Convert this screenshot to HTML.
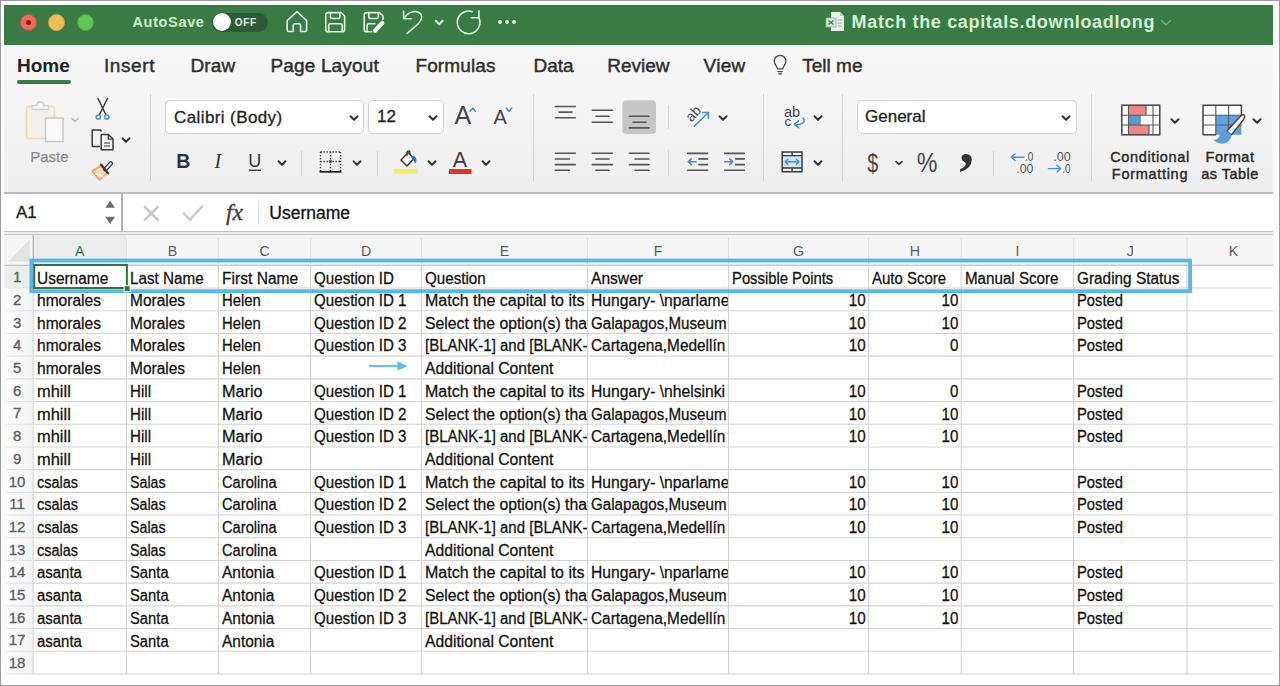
<!DOCTYPE html>
<html lang="en"><head><meta charset="utf-8"><title>Match the capitals.downloadlong</title>
<style>
*{box-sizing:border-box;margin:0;padding:0}
html,body{width:1280px;height:686px;overflow:hidden;background:#fff}
body{font-family:"Liberation Sans",sans-serif;color:#222;position:relative}
.abs,.t{position:absolute;white-space:pre}
.t{line-height:1}
#frame{position:absolute;left:0;top:0;width:1280px;height:686px;border:1px solid #9c9ca0;pointer-events:none;z-index:50}
#title{position:absolute;left:4px;top:5.200px;width:1269px;height:39.400px;background:#3a7b45}
#tabs{position:absolute;left:4px;top:44.600px;width:1269px;height:148.400px;background:linear-gradient(#f6f6f6,#f4f4f4 45%,#eeeeee)}
#ribbon{display:none}
#ribbonline{position:absolute;left:4px;top:192.400px;width:1269px;height:1.600px;background:#bcbcbc}
#fbar{position:absolute;left:4px;top:194px;width:1269px;height:37px;background:#fff}
.sep{position:absolute;width:1px;background:#d4d4d4}
.box{position:absolute;background:#fff;border:1px solid #d2d2d2;border-radius:5px}
.tab{position:absolute;top:55px;font-size:19px;line-height:22px;color:#2e2e2e;white-space:pre;-webkit-text-stroke:0.45px #2e2e2e}
.cell{position:absolute;font-size:17.3px;line-height:20px;white-space:pre;color:#111;overflow:hidden;-webkit-text-stroke:0.28px #111;transform:scaleX(0.88);transform-origin:0 50%}
.cell.r{transform-origin:100% 50%;text-align:right}

.hd{position:absolute;font-size:14.2px;line-height:18px;color:#555;text-align:center;white-space:pre}
.lbl{position:absolute;font-size:14.5px;line-height:17px;color:#262626;text-align:center;white-space:pre;-webkit-text-stroke:0.38px #262626}
svg{position:absolute;overflow:visible}
</style></head>
<body>
<div id="title"></div>
<div class="abs" style="left:19.5px;top:13.5px;width:17px;height:17px;border-radius:50%;background:#ee6a5f;border:1px solid #d1503f"></div>
<div class="abs" style="left:48.0px;top:13.5px;width:17px;height:17px;border-radius:50%;background:#f5bd4f;border:1px solid #d6a13d"></div>
<div class="abs" style="left:76.5px;top:13.5px;width:17px;height:17px;border-radius:50%;background:#61c455;border:1px solid #52a73c"></div>
<div class="abs" style="left:25.5px;top:19.5px;width:5px;height:5px;border-radius:50%;background:#8c1a10"></div>
<div class="t" style="left:132.500px;top:15.300px;font-size:14.5px;font-weight:bold;letter-spacing:0.65px;color:#cfeed3">AutoSave</div>
<div class="abs" style="left:212px;top:12.500px;width:56px;height:19.500px;border-radius:10px;background:#2d5b36"></div>
<div class="abs" style="left:212.500px;top:13.300px;width:18px;height:18px;border-radius:50%;background:#fff;box-shadow:0 0.5px 1.5px rgba(0,0,0,.4)"></div>
<div class="t" style="left:234.800px;top:17.600px;font-size:10px;font-weight:bold;color:#e3f3e5;letter-spacing:0.6px">OFF</div>
<svg style="left:280px;top:5px" width="250" height="40" viewBox="280 5 250 40" fill="none" stroke="#dff3e1" stroke-width="1.6" stroke-linecap="round" stroke-linejoin="round">
<path d="M287.200 20.500 L296.900 11.700 L306.600 20.500 V30 Q306.600 31.500 305.100 31.500 H300.600 V25.500 Q300.600 23.800 298.900 23.800 H294.900 Q293.200 23.800 293.200 25.500 V31.500 H288.700 Q287.200 31.500 287.200 30 Z"/>
<path d="M328.200 12.600 H341.200 L344.600 16 V29.400 Q344.600 31.800 342.200 31.800 H328.200 Q325.800 31.800 325.800 29.400 V15 Q325.800 12.600 328.200 12.600 Z"/><path d="M330.400 12.800 V16.800 Q330.400 18.500 332.100 18.500 H338.200 Q339.900 18.500 339.900 16.800 V12.800"/><path d="M328.700 31.600 V25.500 Q328.700 23.800 330.400 23.800 H340.500 Q342.200 23.800 342.200 25.500 V31.600"/>
<path d="M372 31.800 H366.600 Q364.200 31.800 364.200 29.400 V15 Q364.200 12.600 366.600 12.600 H379.600 L383 16 V19.500"/><path d="M368.800 12.800 V16.800 Q368.800 18.500 370.500 18.500 H376.600 Q378.300 18.500 378.300 16.800 V12.800"/><path d="M367.100 31.600 V25.500 Q367.100 23.800 368.800 23.800 H375"/>
<path d="M382.300 23 L375 30.800" stroke="#f4fbf4" stroke-width="4.200"/>
<path d="M403.600 11.300 V18.700 H411.200"/><path d="M404 18.300 C407 14 411 11.500 415 11.500 C419.500 11.500 422 14.500 421.700 17.500 C421.500 20 420 22 418 24 L407.200 33.400"/>
<path d="M435.800 20.800 L439.200 24.400 L442.600 20.800" stroke-width="2"/>
<path d="M478.870 17.680 A11.300 11.300 0 1 1 472.100 11.650"/><path d="M471.200 17.700 H478.900 V11.100"/>
</svg>
<div class="abs" style="left:498.1px;top:20.200px;width:4px;height:4px;border-radius:50%;background:#dff3e1"></div>
<div class="abs" style="left:505.2px;top:20.200px;width:4px;height:4px;border-radius:50%;background:#dff3e1"></div>
<div class="abs" style="left:512.2px;top:20.200px;width:4px;height:4px;border-radius:50%;background:#dff3e1"></div>
<svg style="left:824.500px;top:11px" width="22" height="22" viewBox="0 0 22 22"><path d="M6 1 H15 L19 5 V20 H6 Z" fill="#e8f1e9"/><path d="M15 1 V5 H19 Z" fill="#b9d3bd"/><rect x="1" y="7" width="10" height="9" fill="#d4e6d6" stroke="#8fb896" stroke-width="0.8"/><path d="M3.500 9.500 L8.500 13.500 M8.500 9.500 L3.500 13.500" stroke="#3b7d46" stroke-width="1.2"/><path d="M12.500 9 H17 M12.500 12 H17 M12.500 15 H17" stroke="#8fb896" stroke-width="1"/></svg>
<div class="t" style="left:851.600px;top:13.300px;font-size:18px;font-weight:bold;color:#d5f0d9;letter-spacing:0.66px">Match the capitals.downloadlong</div>
<svg style="left:1160px;top:19px" width="12" height="8" viewBox="0 0 12 8" fill="none" stroke="#74ab7c" stroke-width="1.5" stroke-linecap="round" stroke-linejoin="round"><path d="M1.500 1.500 L6 6 L10.500 1.500"/></svg>
<div id="tabs"></div>
<div class="tab" style="left:17px;font-weight:bold;color:#222;-webkit-text-stroke:0">Home</div>
<div class="tab" style="left:104px;letter-spacing:0.58px">Insert</div>
<div class="tab" style="left:190.5px;letter-spacing:0.1px">Draw</div>
<div class="tab" style="left:270.5px;letter-spacing:0.15px">Page Layout</div>
<div class="tab" style="left:415.5px;letter-spacing:0.1px">Formulas</div>
<div class="tab" style="left:533.5px;letter-spacing:0px">Data</div>
<div class="tab" style="left:607.3px;letter-spacing:0px">Review</div>
<div class="tab" style="left:703.5px;letter-spacing:0.3px">View</div>
<div class="tab" style="left:802.3px;letter-spacing:0px">Tell me</div>
<div class="abs" style="left:17.200px;top:80.200px;width:53.500px;height:3.400px;border-radius:2px;background:#3a7b45"></div>
<svg style="left:772.300px;top:54px" width="16.200" height="21.600" viewBox="0 0 18 24" fill="none" stroke="#444" stroke-width="1.4" stroke-linecap="round" stroke-linejoin="round"><path d="M6 16.500 C6 13.500 2.500 12 2.500 8 A6.500 6.500 0 0 1 15.500 8 C15.500 12 12 13.500 12 16.500 Z"/><path d="M6.500 19.500 H11.500 M7.500 22 H10.500"/></svg>
<div id="ribbon"></div><div id="ribbonline"></div>
<div class="sep" style="left:150px;top:93.5px;height:87.5px"></div>
<div class="sep" style="left:533px;top:93.5px;height:87.5px"></div>
<div class="sep" style="left:763px;top:93.5px;height:87.5px"></div>
<div class="sep" style="left:841.5px;top:93.5px;height:87.5px"></div>
<div class="sep" style="left:1091px;top:93.5px;height:87.5px"></div>
<div class="sep" style="left:301px;top:151px;height:25px"></div>
<div class="sep" style="left:377px;top:151px;height:25px"></div>
<div class="sep" style="left:668px;top:105px;height:24px"></div>
<div class="sep" style="left:668px;top:150px;height:26px"></div>
<div class="sep" style="left:993px;top:151px;height:25px"></div>
<div class="box" style="left:165px;top:100px;width:199px;height:34px"></div>
<div class="box" style="left:368px;top:100px;width:76px;height:34px"></div>
<div class="box" style="left:857px;top:100px;width:220px;height:34px"></div>
<div class="t" style="left:174px;top:108.600px;font-size:17px;letter-spacing:0.4px;color:#1e1e1e;-webkit-text-stroke:0.3px #1e1e1e">Calibri (Body)</div>
<div class="t" style="left:377px;top:108px;font-size:17px;color:#1e1e1e;-webkit-text-stroke:0.3px #1e1e1e">12</div>
<div class="t" style="left:865px;top:108px;font-size:17px;color:#1e1e1e;-webkit-text-stroke:0.3px #1e1e1e">General</div>
<svg style="left:348px;top:113px" width="12" height="10" viewBox="-6 -5 12 10" fill="none" stroke="#333" stroke-width="2" stroke-linecap="round" stroke-linejoin="round"><path d="M-3.5 -1.75 L0 1.75 L3.5 -1.75"/></svg>
<svg style="left:427px;top:113px" width="12" height="10" viewBox="-6 -5 12 10" fill="none" stroke="#333" stroke-width="2" stroke-linecap="round" stroke-linejoin="round"><path d="M-3.5 -1.75 L0 1.75 L3.5 -1.75"/></svg>
<svg style="left:1060px;top:113px" width="12" height="10" viewBox="-6 -5 12 10" fill="none" stroke="#333" stroke-width="2" stroke-linecap="round" stroke-linejoin="round"><path d="M-3.5 -1.75 L0 1.75 L3.5 -1.75"/></svg>
<svg style="left:120px;top:135px" width="12" height="10" viewBox="-6 -5 12 10" fill="none" stroke="#333" stroke-width="2" stroke-linecap="round" stroke-linejoin="round"><path d="M-3.5 -1.75 L0 1.75 L3.5 -1.75"/></svg>
<svg style="left:275.5px;top:158px" width="12" height="10" viewBox="-6 -5 12 10" fill="none" stroke="#333" stroke-width="2" stroke-linecap="round" stroke-linejoin="round"><path d="M-3.5 -1.75 L0 1.75 L3.5 -1.75"/></svg>
<svg style="left:350.8px;top:157.5px" width="12" height="10" viewBox="-6 -5 12 10" fill="none" stroke="#333" stroke-width="2" stroke-linecap="round" stroke-linejoin="round"><path d="M-3.5 -1.75 L0 1.75 L3.5 -1.75"/></svg>
<svg style="left:426px;top:157.5px" width="12" height="10" viewBox="-6 -5 12 10" fill="none" stroke="#333" stroke-width="2" stroke-linecap="round" stroke-linejoin="round"><path d="M-3.5 -1.75 L0 1.75 L3.5 -1.75"/></svg>
<svg style="left:479.7px;top:157.5px" width="12" height="10" viewBox="-6 -5 12 10" fill="none" stroke="#333" stroke-width="2" stroke-linecap="round" stroke-linejoin="round"><path d="M-3.5 -1.75 L0 1.75 L3.5 -1.75"/></svg>
<svg style="left:717.2px;top:113px" width="12" height="10" viewBox="-6 -5 12 10" fill="none" stroke="#333" stroke-width="2" stroke-linecap="round" stroke-linejoin="round"><path d="M-3.5 -1.75 L0 1.75 L3.5 -1.75"/></svg>
<svg style="left:812.3px;top:113px" width="12" height="10" viewBox="-6 -5 12 10" fill="none" stroke="#333" stroke-width="2" stroke-linecap="round" stroke-linejoin="round"><path d="M-3.5 -1.75 L0 1.75 L3.5 -1.75"/></svg>
<svg style="left:812.3px;top:157.8px" width="12" height="10" viewBox="-6 -5 12 10" fill="none" stroke="#333" stroke-width="2" stroke-linecap="round" stroke-linejoin="round"><path d="M-3.5 -1.75 L0 1.75 L3.5 -1.75"/></svg>
<svg style="left:1169px;top:115.8px" width="12" height="10" viewBox="-6 -5 12 10" fill="none" stroke="#333" stroke-width="2" stroke-linecap="round" stroke-linejoin="round"><path d="M-3.5 -1.75 L0 1.75 L3.5 -1.75"/></svg>
<svg style="left:1250.6px;top:115.8px" width="12" height="10" viewBox="-6 -5 12 10" fill="none" stroke="#333" stroke-width="2" stroke-linecap="round" stroke-linejoin="round"><path d="M-3.5 -1.75 L0 1.75 L3.5 -1.75"/></svg>
<svg style="left:69px;top:115px" width="12" height="10" viewBox="-6 -5 12 10" fill="none" stroke="#b8b8b8" stroke-width="1.6" stroke-linecap="round" stroke-linejoin="round"><path d="M-3 -1.5 L0 1.5 L3 -1.5"/></svg>
<svg style="left:893px;top:158px" width="12" height="10" viewBox="-6 -5 12 10" fill="none" stroke="#333" stroke-width="1.7" stroke-linecap="round" stroke-linejoin="round"><path d="M-2.9 -1.45 L0 1.45 L2.9 -1.45"/></svg>
<svg style="left:0;top:0" width="1280" height="200" viewBox="0 0 1280 200">
<rect x="26.5" y="106.5" width="28" height="32" rx="1.5" fill="#f4f1ec" stroke="#f0d9b8" stroke-width="1.6"/>
<path d="M32 109.500 V105.500 H37 C37 100.500 43.500 100.500 43.500 105.500 H48.500 V109.500 Z" fill="#f6f6f6" stroke="#d0d0d0" stroke-width="1.3"/>
<rect x="45.500" y="118" width="17.500" height="23.500" fill="#fafafa" stroke="#c6c6c6" stroke-width="1.5"/>
<path d="M98 98.500 L105.800 114.500 M107.500 98.500 L99.500 114.500" stroke="#3a3a3a" stroke-width="1.5" fill="none" stroke-linecap="round"/>
<circle cx="98.300" cy="117" r="2.100" fill="none" stroke="#4290d8" stroke-width="1.5"/><circle cx="106.800" cy="117" r="2.100" fill="none" stroke="#4290d8" stroke-width="1.5"/>
<path d="M100 146.500 H92.200 V130 H100.500 L101.500 131.500" fill="none" stroke="#3a3a3a" stroke-width="1.5" stroke-linejoin="round"/>
<path d="M101.200 134.500 H108.500 L113 139 V149.800 H101.200 Z" fill="#f3f3f3" stroke="#3a3a3a" stroke-width="1.5" stroke-linejoin="round"/><path d="M108.300 134.800 V139.200 H112.800" fill="none" stroke="#3a3a3a" stroke-width="1.300"/><path d="M104 143 H110 M104 146 H110" stroke="#3a3a3a" stroke-width="1.1"/>
<path d="M92.300 171 L101.500 165.500 L107 173 L99.500 180 Z" fill="#fbdcba" stroke="#f0a04e" stroke-width="1.600" stroke-linejoin="round"/><path d="M95.300 173.300 L103.300 177" stroke="#fff7ee" stroke-width="1.600"/>
<path d="M105.300 169.300 L110.800 163.500" stroke="#3a3a3a" stroke-width="4.600" stroke-linecap="round"/><path d="M105.300 169.300 L110.800 163.500" stroke="#efefef" stroke-width="1.900" stroke-linecap="round"/>
<path d="M100.900 164.600 L108 173.300" stroke="#3a3a3a" stroke-width="2.300" stroke-linecap="round"/>
<text x="176.300" y="168.200" font-family="Liberation Sans, sans-serif" font-weight="bold" font-size="19.5" fill="#333">B</text>
<text x="214.500" y="168.200" font-family="Liberation Serif, serif" font-style="italic" font-size="20" fill="#333">I</text>
<text x="248.300" y="167" font-family="Liberation Sans, sans-serif" font-size="18" fill="#333">U</text>
<path d="M249 170.300 H261" stroke="#444" stroke-width="1.4"/>
<path d="M320.500 152 H340.500 M320.500 152 V171 M340.500 152 V171 M330.500 152 V171 M320.500 161.500 H340.500" stroke="#333" stroke-width="1.4" stroke-dasharray="1.3 1.7" fill="none"/><path d="M319.500 171.800 H341.500" stroke="#222" stroke-width="1.8"/><circle cx="330.500" cy="161.500" r="1.300" fill="none" stroke="#333" stroke-width="0.9"/>
<path d="M401 160 L408 152.500 L414 158.500 L407 166 Z" fill="#fff" stroke="#3a3a3a" stroke-width="1.5" stroke-linejoin="round"/><path d="M407 156 V152.500 C407 150.500 410 150.500 410 152.500 V155" fill="none" stroke="#3a3a3a" stroke-width="1.300"/><path d="M412 156.500 C415.500 155.500 416.500 159 415.500 163 C414 160 413.500 159 412 158.500 Z" fill="#2d6fc0" stroke="#2d6fc0" stroke-width="1"/>
<rect x="394" y="169" width="24" height="5" fill="#f6ee5c"/>
<text x="452.800" y="166.600" font-family="Liberation Sans, sans-serif" font-size="21.5" fill="#3a3a3a">A</text>
<rect x="449" y="169" width="22.500" height="5" fill="#e0342c"/>
<text x="454.500" y="124.300" font-family="Liberation Sans, sans-serif" font-size="25" fill="#444">A</text>
<path d="M470 111.200 L472.700 108 L475.400 111.200" fill="none" stroke="#4290d8" stroke-width="1.500" stroke-linecap="round" stroke-linejoin="round"/>
<text x="493.500" y="124.300" font-family="Liberation Sans, sans-serif" font-size="20" fill="#444">A</text>
<path d="M506.300 108 L509 111.200 L511.700 108" fill="none" stroke="#4290d8" stroke-width="1.500" stroke-linecap="round" stroke-linejoin="round"/>
<rect x="622.300" y="100.300" width="33.700" height="33.700" rx="4" fill="#c6c6c6"/>
<path d="M555.3 106.5 H575.4 M559 112.1 H572 M555.3 117.8 H575.4 M592.3 110.3 H612.5 M596 116.3 H609 M592.3 122.3 H612.5 M629.4 116.3 H649 M633 122.3 H646 M629.4 127.9 H649 M555.3 153.2 H575.4 M592.3 153.2 H612.5 M629.4 153.2 H649 M555.3 159 H569.5 M595.8 159 H609 M635 159 H649 M555.3 164.6 H575.4 M592.3 164.6 H612.5 M629.4 164.6 H649 M555.3 170.3 H569.5 M595.8 170.3 H609 M635 170.3 H649 M687.8 153.4 H707.6 M724.7 153.4 H744.3 M687.8 170.2 H707.6 M724.7 170.2 H744.3 M698.9 158.9 H707.6 M735.6 158.9 H744.3 M698.9 164.6 H707.6 M735.6 164.6 H744.3" stroke="#555" stroke-width="1.6" fill="none" stroke-linecap="round"/>
<path d="M696.200 161.700 H688.500 M691.300 158.800 L688.300 161.700 L691.300 164.600" fill="none" stroke="#4290d8" stroke-width="1.600" stroke-linecap="round" stroke-linejoin="round"/>
<path d="M724.700 161.700 H732.500 M729.700 158.800 L732.700 161.700 L729.700 164.600" fill="none" stroke="#4290d8" stroke-width="1.600" stroke-linecap="round" stroke-linejoin="round"/>
<text transform="translate(691.500,122.500) rotate(-48)" font-family="Liberation Sans, sans-serif" font-size="14" fill="#444">ab</text>
<path d="M694.300 126.200 L708 113 M702.500 112.600 L708.400 112.600 L708.400 118.500" fill="none" stroke="#4290d8" stroke-width="1.500" stroke-linecap="round" stroke-linejoin="round"/>
<text x="784" y="117.200" font-family="Liberation Sans, sans-serif" font-size="14.5" fill="#444">ab</text>
<text x="784.600" y="126.400" font-family="Liberation Sans, sans-serif" font-size="13.500" fill="#444">c</text>
<path d="M803 118 C806 121 803 125.500 795 124.500 M798.500 120.800 L794.200 124.400 L798.800 127.800" fill="none" stroke="#4290d8" stroke-width="1.500" stroke-linecap="round" stroke-linejoin="round"/>
<rect x="782.200" y="155.600" width="19.800" height="12.400" fill="#cfe5f7"/>
<rect x="782.200" y="152" width="19.800" height="19.700" fill="none" stroke="#3a3a3a" stroke-width="1.500"/><path d="M782.200 155.600 H802 M782.200 168 H802 M792.100 152 V155.600 M792.100 168 V171.700" stroke="#3a3a3a" stroke-width="1.300"/>
<path d="M785.300 161.800 H798.900 M787.800 159.300 L785.200 161.800 L787.800 164.300 M796.400 159.300 L799 161.800 L796.400 164.300" fill="none" stroke="#4290d8" stroke-width="1.400" stroke-linecap="round" stroke-linejoin="round"/>
<text transform="translate(867.300,171.500) scale(0.760,1)" font-family="Liberation Sans, sans-serif" font-size="26" fill="#444">$</text>
<text transform="translate(916.800,172.300) scale(0.860,1)" font-family="Liberation Sans, sans-serif" font-size="27" fill="#444">%</text>
<text x="959.300" y="162.500" font-family="Liberation Serif, serif" font-weight="bold" font-size="59" fill="#333">,</text>
<text x="1025" y="161.400" textLength="8.400" font-family="Liberation Sans, sans-serif" font-size="13.6" fill="#555" lengthAdjust="spacingAndGlyphs">.0</text><text x="1016.300" y="172.600" textLength="17" font-family="Liberation Sans, sans-serif" font-size="13.6" fill="#555" lengthAdjust="spacingAndGlyphs">.00</text>
<text x="1053.300" y="161.400" textLength="17.400" font-family="Liberation Sans, sans-serif" font-size="13.6" fill="#555" lengthAdjust="spacingAndGlyphs">.00</text><text x="1062.300" y="172.600" textLength="8.400" font-family="Liberation Sans, sans-serif" font-size="13.6" fill="#555" lengthAdjust="spacingAndGlyphs">.0</text>
<path d="M1023.800 157.300 H1011.600 M1015 154 L1011.400 157.300 L1015 160.600" fill="none" stroke="#4290d8" stroke-width="1.400" stroke-linecap="round" stroke-linejoin="round"/>
<path d="M1048.400 168.600 H1060.400 M1057 165.300 L1060.600 168.600 L1057 171.900" fill="none" stroke="#4290d8" stroke-width="1.400" stroke-linecap="round" stroke-linejoin="round"/>
<rect x="1121.8" y="105.2" width="38" height="29.6" fill="#fff"/>
<rect x="1128.500" y="105.2" width="17.500" height="10" fill="#ee8686"/><rect x="1128.500" y="115.200" width="11" height="9.800" fill="#5b9bd5"/><rect x="1128.500" y="125" width="20.500" height="9.800" fill="#ee8686"/>
<path d="M1121.8 115.200 H1159.8 M1121.8 125 H1159.8 M1128.500 105.2 V134.8 M1146 105.2 V115.200 M1140 115.200 V125 M1149 125 V134.8 M1153 105.2 V134.8" stroke="#555" stroke-width="1.1" fill="none"/>
<rect x="1121.8" y="105.2" width="38" height="29.6" fill="none" stroke="#444" stroke-width="1.500"/>
<rect x="1203" y="105.2" width="38.4" height="29.6" fill="#fff"/>
<rect x="1215.800" y="115.200" width="25.600" height="19.600" fill="#5ea2e4"/>
<path d="M1203 115.200 H1241.4 M1203 125 H1241.4 M1215.800 105.2 V134.8 M1228.600 105.2 V134.8" stroke="#555" stroke-width="1.1" fill="none"/>
<path d="M1203 134.8 V105.2 H1241.4 V116" fill="none" stroke="#444" stroke-width="1.500"/><path d="M1203 134.8 H1216" stroke="#444" stroke-width="1.500"/>
<path d="M1243.600 114.600 C1245.400 115.600 1244.800 118 1243 120.200 L1231.500 134.800 L1226.800 131.200 L1239.500 117.300 C1241 115.600 1242.600 114.200 1243.600 114.600 Z" fill="#fff" stroke="#444" stroke-width="1.400" stroke-linejoin="round"/>
<path d="M1226.600 131.400 C1222.300 131 1220.500 134 1219 137.500 C1217.500 140 1215.800 140.300 1214.300 139.800 C1217.300 144 1225 144.500 1228.600 140.800 C1230.600 138.700 1231.200 136.300 1230.800 134.600 Z" fill="#5b9bd8" stroke="#5b9bd8" stroke-width="0.8"/>
</svg>
<div class="t" style="left:30.200px;top:149px;font-size:15px;color:#8a8a8a;-webkit-text-stroke:0.25px #8a8a8a">Paste</div>
<div class="lbl" style="left:1100px;top:149px;width:100px;letter-spacing:0.65px">Conditional</div>
<div class="lbl" style="left:1100px;top:165.500px;width:100px;letter-spacing:0.7px">Formatting</div>
<div class="lbl" style="left:1190px;top:149px;width:80px;letter-spacing:0.5px">Format</div>
<div class="lbl" style="left:1190px;top:165.500px;width:80px;letter-spacing:0.5px">as Table</div>
<div id="fbar"></div>
<div class="abs" style="left:4px;top:231px;width:1269px;height:4px;background:#ececec;border-top:1.5px solid #bdbdbd;border-bottom:1px solid #c9c9c9"></div>
<div class="abs" style="left:121.400px;top:194px;width:1.500px;height:37px;background:#b2b2b2"></div>
<div class="abs" style="left:257.500px;top:202px;width:1px;height:22px;background:#e0e0e0"></div>
<div class="t" style="left:16px;top:204.200px;font-size:17px;color:#222;-webkit-text-stroke:0.3px #222">A1</div>
<div class="t" style="left:269.300px;top:204.700px;font-size:17.5px;color:#111;-webkit-text-stroke:0.3px #111">Username</div>
<svg style="left:0;top:190px" width="400" height="50" viewBox="0 190 400 50">
<path d="M105.300 207.800 L110.100 200.800 L114.900 207.800 Z M105.300 216.800 L110.100 224 L114.900 216.800 Z" fill="#6a6a6a"/>
<path d="M144.800 206.800 L157.800 219.800 M157.800 206.800 L144.800 219.800" stroke="#c8c8c8" stroke-width="2.500" fill="none" stroke-linecap="round"/>
<path d="M184 213.500 L190 220 L202 206.500" stroke="#cccccc" stroke-width="2.500" fill="none" stroke-linecap="round" stroke-linejoin="round"/>
<text x="226" y="219.500" font-family="Liberation Serif, serif" font-style="italic" font-size="23.5" fill="#444" stroke="#444" stroke-width="0.4">fx</text>
</svg>
<div class="abs" style="left:4px;top:235px;width:1269px;height:30.329999999999984px;background:#f5f5f5"></div>
<div class="abs" style="left:4px;top:265.33px;width:29.200000000000003px;height:408.59999999999997px;background:linear-gradient(to right,#fcfcfc,#f3f3f3)"></div>
<div class="abs" style="left:33.2px;top:235px;width:93.2px;height:30.329999999999984px;background:#ececec"></div>
<div class="abs" style="left:4px;top:265.33px;width:29.200000000000003px;height:22.7px;background:#ececec"></div>
<svg style="left:0;top:0" width="1280" height="686" viewBox="0 0 1280 686">
<path d="M33.2 265.33 H1273 M33.2 288.03 H1273 M33.2 310.73 H1273 M33.2 333.43 H1273 M33.2 356.13 H1273 M33.2 378.83 H1273 M33.2 401.53 H1273 M33.2 424.23 H1273 M33.2 446.93 H1273 M33.2 469.63 H1273 M33.2 492.33 H1273 M33.2 515.03 H1273 M33.2 537.73 H1273 M33.2 560.43 H1273 M33.2 583.13 H1273 M33.2 605.83 H1273 M33.2 628.53 H1273 M33.2 651.23 H1273 M33.2 673.93 H1273 M33.2 265.33 V673.93 M126.4 265.33 V673.93 M218.4 265.33 V673.93 M310.6 265.33 V673.93 M421.4 265.33 V673.93 M587.5 265.33 V673.93 M728.5 265.33 V673.93 M868.5 265.33 V673.93 M961.2 265.33 V673.93 M1073.6 265.33 V673.93 M1187 265.33 V673.93" stroke="#d3d3d3" stroke-width="1.1" fill="none"/>
<path d="M126.4 238 V265.33 M218.4 238 V265.33 M310.6 238 V265.33 M421.4 238 V265.33 M587.5 238 V265.33 M728.5 238 V265.33 M868.5 238 V265.33 M961.2 238 V265.33 M1073.6 238 V265.33 M1187 238 V265.33" stroke="#e0e0e0" stroke-width="1" fill="none"/>
<path d="M7 265.33 H33.2 M7 288.03 H33.2 M7 310.73 H33.2 M7 333.43 H33.2 M7 356.13 H33.2 M7 378.83 H33.2 M7 401.53 H33.2 M7 424.23 H33.2 M7 446.93 H33.2 M7 469.63 H33.2 M7 492.33 H33.2 M7 515.03 H33.2 M7 537.73 H33.2 M7 560.43 H33.2 M7 583.13 H33.2 M7 605.83 H33.2 M7 628.53 H33.2 M7 651.23 H33.2 M7 673.93 H33.2" stroke="#e2e2e2" stroke-width="1.1" fill="none"/>
<path d="M4 265.33 H1273" stroke="#c6c6c6" stroke-width="1.2" fill="none"/>
<path d="M33.2 235 V265.33" stroke="#a6a6a6" stroke-width="1.1" fill="none"/>
<path d="M8.400 261.500 H29.700 V239.800 Z" fill="#e2e2e2"/>
<path d="M368.800 366.00 H399" stroke="#5abdee" stroke-width="1.900" fill="none"/><path d="M397.300 361.20 L407.800 366.00 L397.300 370.80 Z" fill="#5abdee"/>
<rect x="31.300" y="260.500" width="1158.800" height="30.700" fill="none" stroke="#58b9e7" stroke-width="3.800"/>
<rect x="34.200" y="265" width="92.7" height="23.0" fill="none" stroke="#2f7346" stroke-width="2"/>
<rect x="124.10000000000001" y="285.72999999999996" width="6" height="6" fill="#2f7346" stroke="#fff" stroke-width="1"/>
</svg>
<div class="hd" style="left:59.8px;top:242px;width:40px;color:#2f7346">A</div>
<div class="hd" style="left:152.4px;top:242px;width:40px;color:#5c5c5c">B</div>
<div class="hd" style="left:244.5px;top:242px;width:40px;color:#5c5c5c">C</div>
<div class="hd" style="left:346.0px;top:242px;width:40px;color:#5c5c5c">D</div>
<div class="hd" style="left:484.4px;top:242px;width:40px;color:#5c5c5c">E</div>
<div class="hd" style="left:638.0px;top:242px;width:40px;color:#5c5c5c">F</div>
<div class="hd" style="left:778.5px;top:242px;width:40px;color:#5c5c5c">G</div>
<div class="hd" style="left:894.9px;top:242px;width:40px;color:#5c5c5c">H</div>
<div class="hd" style="left:997.4px;top:242px;width:40px;color:#5c5c5c">I</div>
<div class="hd" style="left:1110.3px;top:242px;width:40px;color:#5c5c5c">J</div>
<div class="hd" style="left:1213.5px;top:242px;width:40px;color:#5c5c5c">K</div>
<div class="hd" style="left:4px;top:268.23px;width:26.200000000000003px;color:#2f7346;font-size:15px;-webkit-text-stroke:0.3px #2f7346">1</div>
<div class="hd" style="left:4px;top:290.93px;width:26.200000000000003px;color:#5c5c5c;font-size:15px;-webkit-text-stroke:0.3px #5c5c5c">2</div>
<div class="hd" style="left:4px;top:313.63px;width:26.200000000000003px;color:#5c5c5c;font-size:15px;-webkit-text-stroke:0.3px #5c5c5c">3</div>
<div class="hd" style="left:4px;top:336.33px;width:26.200000000000003px;color:#5c5c5c;font-size:15px;-webkit-text-stroke:0.3px #5c5c5c">4</div>
<div class="hd" style="left:4px;top:359.03px;width:26.200000000000003px;color:#5c5c5c;font-size:15px;-webkit-text-stroke:0.3px #5c5c5c">5</div>
<div class="hd" style="left:4px;top:381.73px;width:26.200000000000003px;color:#5c5c5c;font-size:15px;-webkit-text-stroke:0.3px #5c5c5c">6</div>
<div class="hd" style="left:4px;top:404.43px;width:26.200000000000003px;color:#5c5c5c;font-size:15px;-webkit-text-stroke:0.3px #5c5c5c">7</div>
<div class="hd" style="left:4px;top:427.13px;width:26.200000000000003px;color:#5c5c5c;font-size:15px;-webkit-text-stroke:0.3px #5c5c5c">8</div>
<div class="hd" style="left:4px;top:449.83px;width:26.200000000000003px;color:#5c5c5c;font-size:15px;-webkit-text-stroke:0.3px #5c5c5c">9</div>
<div class="hd" style="left:4px;top:472.53px;width:26.200000000000003px;color:#5c5c5c;font-size:15px;-webkit-text-stroke:0.3px #5c5c5c">10</div>
<div class="hd" style="left:4px;top:495.23px;width:26.200000000000003px;color:#5c5c5c;font-size:15px;-webkit-text-stroke:0.3px #5c5c5c">11</div>
<div class="hd" style="left:4px;top:517.93px;width:26.200000000000003px;color:#5c5c5c;font-size:15px;-webkit-text-stroke:0.3px #5c5c5c">12</div>
<div class="hd" style="left:4px;top:540.63px;width:26.200000000000003px;color:#5c5c5c;font-size:15px;-webkit-text-stroke:0.3px #5c5c5c">13</div>
<div class="hd" style="left:4px;top:563.33px;width:26.200000000000003px;color:#5c5c5c;font-size:15px;-webkit-text-stroke:0.3px #5c5c5c">14</div>
<div class="hd" style="left:4px;top:586.03px;width:26.200000000000003px;color:#5c5c5c;font-size:15px;-webkit-text-stroke:0.3px #5c5c5c">15</div>
<div class="hd" style="left:4px;top:608.73px;width:26.200000000000003px;color:#5c5c5c;font-size:15px;-webkit-text-stroke:0.3px #5c5c5c">16</div>
<div class="hd" style="left:4px;top:631.43px;width:26.200000000000003px;color:#5c5c5c;font-size:15px;-webkit-text-stroke:0.3px #5c5c5c">17</div>
<div class="hd" style="left:4px;top:654.13px;width:26.200000000000003px;color:#5c5c5c;font-size:15px;-webkit-text-stroke:0.3px #5c5c5c">18</div>
<div class="cell" style="left:36.8px;top:267.93px;width:99.8px;transform:scaleX(0.8938)">Username</div>
<div class="cell" style="left:130.0px;top:267.93px;width:99.7px;transform:scaleX(0.8824)">Last Name</div>
<div class="cell" style="left:222.0px;top:267.93px;width:97.7px;transform:scaleX(0.9024)">First Name</div>
<div class="cell" style="left:314.2px;top:267.93px;width:121.8px;transform:scaleX(0.8767)">Question ID</div>
<div class="cell" style="left:425.0px;top:267.93px;width:184.6px;transform:scaleX(0.8782)">Question</div>
<div class="cell" style="left:591.1px;top:267.93px;width:151.8px;transform:scaleX(0.9024)">Answer</div>
<div class="cell" style="left:732.1px;top:267.93px;width:158.7px;transform:scaleX(0.8569)">Possible Points</div>
<div class="cell" style="left:872.1px;top:267.93px;width:102.5px;transform:scaleX(0.8655)">Auto Score</div>
<div class="cell" style="left:964.8px;top:267.93px;width:123.6px;transform:scaleX(0.8769)">Manual Score</div>
<div class="cell" style="left:1077.2px;top:267.93px;width:296.3px;transform:scaleX(0.8891)">Grading Status</div>
<div class="cell" style="left:36.8px;top:290.03px;width:99.1px;transform:scaleX(0.9004)">hmorales</div>
<div class="cell" style="left:130.0px;top:290.03px;width:98.3px;transform:scaleX(0.8948)">Morales</div>
<div class="cell" style="left:222.0px;top:290.03px;width:102.8px;transform:scaleX(0.8581)">Helen</div>
<div class="cell" style="left:314.2px;top:290.03px;width:122.0px;transform:scaleX(0.8754)">Question ID 1</div>
<div class="cell" style="left:425.0px;top:290.03px;width:174.7px;transform:scaleX(0.9277)">Match the capital to its country</div>
<div class="cell" style="left:591.1px;top:290.03px;width:151.2px;transform:scaleX(0.9059)">Hungary- \nparlament</div>
<div class="cell r" style="left:728.5px;top:290.03px;width:136.7px;transform:scaleX(0.88)">10</div>
<div class="cell r" style="left:868.5px;top:290.03px;width:89.4px;transform:scaleX(0.88)">10</div>
<div class="cell" style="left:1077.2px;top:290.03px;width:308.1px;transform:scaleX(0.8548)">Posted</div>
<div class="cell" style="left:36.8px;top:312.73px;width:99.1px;transform:scaleX(0.9004)">hmorales</div>
<div class="cell" style="left:130.0px;top:312.73px;width:98.3px;transform:scaleX(0.8948)">Morales</div>
<div class="cell" style="left:222.0px;top:312.73px;width:102.8px;transform:scaleX(0.8581)">Helen</div>
<div class="cell" style="left:314.2px;top:312.73px;width:122.0px;transform:scaleX(0.8754)">Question ID 2</div>
<div class="cell" style="left:425.0px;top:312.73px;width:177.8px;transform:scaleX(0.9116)">Select the option(s) that apply</div>
<div class="cell" style="left:591.1px;top:312.73px;width:156.4px;transform:scaleX(0.8761)">Galapagos,Museum</div>
<div class="cell r" style="left:728.5px;top:312.73px;width:136.7px;transform:scaleX(0.88)">10</div>
<div class="cell r" style="left:868.5px;top:312.73px;width:89.4px;transform:scaleX(0.88)">10</div>
<div class="cell" style="left:1077.2px;top:312.73px;width:308.1px;transform:scaleX(0.8548)">Posted</div>
<div class="cell" style="left:36.8px;top:335.43px;width:99.1px;transform:scaleX(0.9004)">hmorales</div>
<div class="cell" style="left:130.0px;top:335.43px;width:98.3px;transform:scaleX(0.8948)">Morales</div>
<div class="cell" style="left:222.0px;top:335.43px;width:102.8px;transform:scaleX(0.8581)">Helen</div>
<div class="cell" style="left:314.2px;top:335.43px;width:122.0px;transform:scaleX(0.8754)">Question ID 3</div>
<div class="cell" style="left:425.0px;top:335.43px;width:186.8px;transform:scaleX(0.868)">[BLANK-1] and [BLANK-2] are cities</div>
<div class="cell" style="left:591.1px;top:335.43px;width:153.9px;transform:scaleX(0.8901)">Cartagena,Medellín</div>
<div class="cell r" style="left:728.5px;top:335.43px;width:136.7px;transform:scaleX(0.88)">10</div>
<div class="cell r" style="left:868.5px;top:335.43px;width:89.4px;transform:scaleX(0.88)">0</div>
<div class="cell" style="left:1077.2px;top:335.43px;width:308.1px;transform:scaleX(0.8548)">Posted</div>
<div class="cell" style="left:36.8px;top:358.13px;width:99.1px;transform:scaleX(0.9004)">hmorales</div>
<div class="cell" style="left:130.0px;top:358.13px;width:98.3px;transform:scaleX(0.8948)">Morales</div>
<div class="cell" style="left:222.0px;top:358.13px;width:282.3px;transform:scaleX(0.8581)">Helen</div>
<div class="cell" style="left:425.0px;top:358.13px;width:348.1px;transform:scaleX(0.9081)">Additional Content</div>
<div class="cell" style="left:36.8px;top:380.83px;width:93.8px;transform:scaleX(0.9513)">mhill</div>
<div class="cell" style="left:130.0px;top:380.83px;width:100.6px;transform:scaleX(0.875)">Hill</div>
<div class="cell" style="left:222.0px;top:380.83px;width:93.9px;transform:scaleX(0.9394)">Mario</div>
<div class="cell" style="left:314.2px;top:380.83px;width:122.0px;transform:scaleX(0.8754)">Question ID 1</div>
<div class="cell" style="left:425.0px;top:380.83px;width:174.7px;transform:scaleX(0.9277)">Match the capital to its country</div>
<div class="cell" style="left:591.1px;top:380.83px;width:151.2px;transform:scaleX(0.9059)">Hungary- \nhelsinki</div>
<div class="cell r" style="left:728.5px;top:380.83px;width:136.7px;transform:scaleX(0.88)">10</div>
<div class="cell r" style="left:868.5px;top:380.83px;width:89.4px;transform:scaleX(0.88)">0</div>
<div class="cell" style="left:1077.2px;top:380.83px;width:308.1px;transform:scaleX(0.8548)">Posted</div>
<div class="cell" style="left:36.8px;top:403.53px;width:93.8px;transform:scaleX(0.9513)">mhill</div>
<div class="cell" style="left:130.0px;top:403.53px;width:100.6px;transform:scaleX(0.875)">Hill</div>
<div class="cell" style="left:222.0px;top:403.53px;width:93.9px;transform:scaleX(0.9394)">Mario</div>
<div class="cell" style="left:314.2px;top:403.53px;width:122.0px;transform:scaleX(0.8754)">Question ID 2</div>
<div class="cell" style="left:425.0px;top:403.53px;width:177.8px;transform:scaleX(0.9116)">Select the option(s) that apply</div>
<div class="cell" style="left:591.1px;top:403.53px;width:156.4px;transform:scaleX(0.8761)">Galapagos,Museum</div>
<div class="cell r" style="left:728.5px;top:403.53px;width:136.7px;transform:scaleX(0.88)">10</div>
<div class="cell r" style="left:868.5px;top:403.53px;width:89.4px;transform:scaleX(0.88)">10</div>
<div class="cell" style="left:1077.2px;top:403.53px;width:308.1px;transform:scaleX(0.8548)">Posted</div>
<div class="cell" style="left:36.8px;top:426.23px;width:93.8px;transform:scaleX(0.9513)">mhill</div>
<div class="cell" style="left:130.0px;top:426.23px;width:100.6px;transform:scaleX(0.875)">Hill</div>
<div class="cell" style="left:222.0px;top:426.23px;width:93.9px;transform:scaleX(0.9394)">Mario</div>
<div class="cell" style="left:314.2px;top:426.23px;width:122.0px;transform:scaleX(0.8754)">Question ID 3</div>
<div class="cell" style="left:425.0px;top:426.23px;width:186.8px;transform:scaleX(0.868)">[BLANK-1] and [BLANK-2] are cities</div>
<div class="cell" style="left:591.1px;top:426.23px;width:153.9px;transform:scaleX(0.8901)">Cartagena,Medellín</div>
<div class="cell r" style="left:728.5px;top:426.23px;width:136.7px;transform:scaleX(0.88)">10</div>
<div class="cell r" style="left:868.5px;top:426.23px;width:89.4px;transform:scaleX(0.88)">10</div>
<div class="cell" style="left:1077.2px;top:426.23px;width:308.1px;transform:scaleX(0.8548)">Posted</div>
<div class="cell" style="left:36.8px;top:448.93px;width:93.8px;transform:scaleX(0.9513)">mhill</div>
<div class="cell" style="left:130.0px;top:448.93px;width:100.6px;transform:scaleX(0.875)">Hill</div>
<div class="cell" style="left:222.0px;top:448.93px;width:257.8px;transform:scaleX(0.9394)">Mario</div>
<div class="cell" style="left:425.0px;top:448.93px;width:348.1px;transform:scaleX(0.9081)">Additional Content</div>
<div class="cell" style="left:36.8px;top:471.63px;width:106.3px;transform:scaleX(0.839)">csalas</div>
<div class="cell" style="left:130.0px;top:471.63px;width:106.9px;transform:scaleX(0.8234)">Salas</div>
<div class="cell" style="left:222.0px;top:471.63px;width:103.8px;transform:scaleX(0.8499)">Carolina</div>
<div class="cell" style="left:314.2px;top:471.63px;width:122.0px;transform:scaleX(0.8754)">Question ID 1</div>
<div class="cell" style="left:425.0px;top:471.63px;width:174.7px;transform:scaleX(0.9277)">Match the capital to its country</div>
<div class="cell" style="left:591.1px;top:471.63px;width:151.2px;transform:scaleX(0.9059)">Hungary- \nparlament</div>
<div class="cell r" style="left:728.5px;top:471.63px;width:136.7px;transform:scaleX(0.88)">10</div>
<div class="cell r" style="left:868.5px;top:471.63px;width:89.4px;transform:scaleX(0.88)">10</div>
<div class="cell" style="left:1077.2px;top:471.63px;width:308.1px;transform:scaleX(0.8548)">Posted</div>
<div class="cell" style="left:36.8px;top:494.33px;width:106.3px;transform:scaleX(0.839)">csalas</div>
<div class="cell" style="left:130.0px;top:494.33px;width:106.9px;transform:scaleX(0.8234)">Salas</div>
<div class="cell" style="left:222.0px;top:494.33px;width:103.8px;transform:scaleX(0.8499)">Carolina</div>
<div class="cell" style="left:314.2px;top:494.33px;width:122.0px;transform:scaleX(0.8754)">Question ID 2</div>
<div class="cell" style="left:425.0px;top:494.33px;width:177.8px;transform:scaleX(0.9116)">Select the option(s) that apply</div>
<div class="cell" style="left:591.1px;top:494.33px;width:156.4px;transform:scaleX(0.8761)">Galapagos,Museum</div>
<div class="cell r" style="left:728.5px;top:494.33px;width:136.7px;transform:scaleX(0.88)">10</div>
<div class="cell r" style="left:868.5px;top:494.33px;width:89.4px;transform:scaleX(0.88)">10</div>
<div class="cell" style="left:1077.2px;top:494.33px;width:308.1px;transform:scaleX(0.8548)">Posted</div>
<div class="cell" style="left:36.8px;top:517.03px;width:106.3px;transform:scaleX(0.839)">csalas</div>
<div class="cell" style="left:130.0px;top:517.03px;width:106.9px;transform:scaleX(0.8234)">Salas</div>
<div class="cell" style="left:222.0px;top:517.03px;width:103.8px;transform:scaleX(0.8499)">Carolina</div>
<div class="cell" style="left:314.2px;top:517.03px;width:122.0px;transform:scaleX(0.8754)">Question ID 3</div>
<div class="cell" style="left:425.0px;top:517.03px;width:186.8px;transform:scaleX(0.868)">[BLANK-1] and [BLANK-2] are cities</div>
<div class="cell" style="left:591.1px;top:517.03px;width:153.9px;transform:scaleX(0.8901)">Cartagena,Medellín</div>
<div class="cell r" style="left:728.5px;top:517.03px;width:136.7px;transform:scaleX(0.88)">10</div>
<div class="cell r" style="left:868.5px;top:517.03px;width:89.4px;transform:scaleX(0.88)">10</div>
<div class="cell" style="left:1077.2px;top:517.03px;width:308.1px;transform:scaleX(0.8548)">Posted</div>
<div class="cell" style="left:36.8px;top:539.73px;width:106.3px;transform:scaleX(0.839)">csalas</div>
<div class="cell" style="left:130.0px;top:539.73px;width:106.9px;transform:scaleX(0.8234)">Salas</div>
<div class="cell" style="left:222.0px;top:539.73px;width:285.0px;transform:scaleX(0.8499)">Carolina</div>
<div class="cell" style="left:425.0px;top:539.73px;width:348.1px;transform:scaleX(0.9081)">Additional Content</div>
<div class="cell" style="left:36.8px;top:562.43px;width:103.1px;transform:scaleX(0.8653)">asanta</div>
<div class="cell" style="left:130.0px;top:562.43px;width:103.0px;transform:scaleX(0.8545)">Santa</div>
<div class="cell" style="left:222.0px;top:562.43px;width:98.7px;transform:scaleX(0.8938)">Antonia</div>
<div class="cell" style="left:314.2px;top:562.43px;width:122.0px;transform:scaleX(0.8754)">Question ID 1</div>
<div class="cell" style="left:425.0px;top:562.43px;width:174.7px;transform:scaleX(0.9277)">Match the capital to its country</div>
<div class="cell" style="left:591.1px;top:562.43px;width:151.2px;transform:scaleX(0.9059)">Hungary- \nparlament</div>
<div class="cell r" style="left:728.5px;top:562.43px;width:136.7px;transform:scaleX(0.88)">10</div>
<div class="cell r" style="left:868.5px;top:562.43px;width:89.4px;transform:scaleX(0.88)">10</div>
<div class="cell" style="left:1077.2px;top:562.43px;width:308.1px;transform:scaleX(0.8548)">Posted</div>
<div class="cell" style="left:36.8px;top:585.13px;width:103.1px;transform:scaleX(0.8653)">asanta</div>
<div class="cell" style="left:130.0px;top:585.13px;width:103.0px;transform:scaleX(0.8545)">Santa</div>
<div class="cell" style="left:222.0px;top:585.13px;width:98.7px;transform:scaleX(0.8938)">Antonia</div>
<div class="cell" style="left:314.2px;top:585.13px;width:122.0px;transform:scaleX(0.8754)">Question ID 2</div>
<div class="cell" style="left:425.0px;top:585.13px;width:177.8px;transform:scaleX(0.9116)">Select the option(s) that apply</div>
<div class="cell" style="left:591.1px;top:585.13px;width:156.4px;transform:scaleX(0.8761)">Galapagos,Museum</div>
<div class="cell r" style="left:728.5px;top:585.13px;width:136.7px;transform:scaleX(0.88)">10</div>
<div class="cell r" style="left:868.5px;top:585.13px;width:89.4px;transform:scaleX(0.88)">10</div>
<div class="cell" style="left:1077.2px;top:585.13px;width:308.1px;transform:scaleX(0.8548)">Posted</div>
<div class="cell" style="left:36.8px;top:607.83px;width:103.1px;transform:scaleX(0.8653)">asanta</div>
<div class="cell" style="left:130.0px;top:607.83px;width:103.0px;transform:scaleX(0.8545)">Santa</div>
<div class="cell" style="left:222.0px;top:607.83px;width:98.7px;transform:scaleX(0.8938)">Antonia</div>
<div class="cell" style="left:314.2px;top:607.83px;width:122.0px;transform:scaleX(0.8754)">Question ID 3</div>
<div class="cell" style="left:425.0px;top:607.83px;width:186.8px;transform:scaleX(0.868)">[BLANK-1] and [BLANK-2] are cities</div>
<div class="cell" style="left:591.1px;top:607.83px;width:153.9px;transform:scaleX(0.8901)">Cartagena,Medellín</div>
<div class="cell r" style="left:728.5px;top:607.83px;width:136.7px;transform:scaleX(0.88)">10</div>
<div class="cell r" style="left:868.5px;top:607.83px;width:89.4px;transform:scaleX(0.88)">10</div>
<div class="cell" style="left:1077.2px;top:607.83px;width:308.1px;transform:scaleX(0.8548)">Posted</div>
<div class="cell" style="left:36.8px;top:630.53px;width:103.1px;transform:scaleX(0.8653)">asanta</div>
<div class="cell" style="left:130.0px;top:630.53px;width:103.0px;transform:scaleX(0.8545)">Santa</div>
<div class="cell" style="left:222.0px;top:630.53px;width:271.0px;transform:scaleX(0.8938)">Antonia</div>
<div class="cell" style="left:425.0px;top:630.53px;width:348.1px;transform:scaleX(0.9081)">Additional Content</div>
<div id="frame"></div>
</body></html>
